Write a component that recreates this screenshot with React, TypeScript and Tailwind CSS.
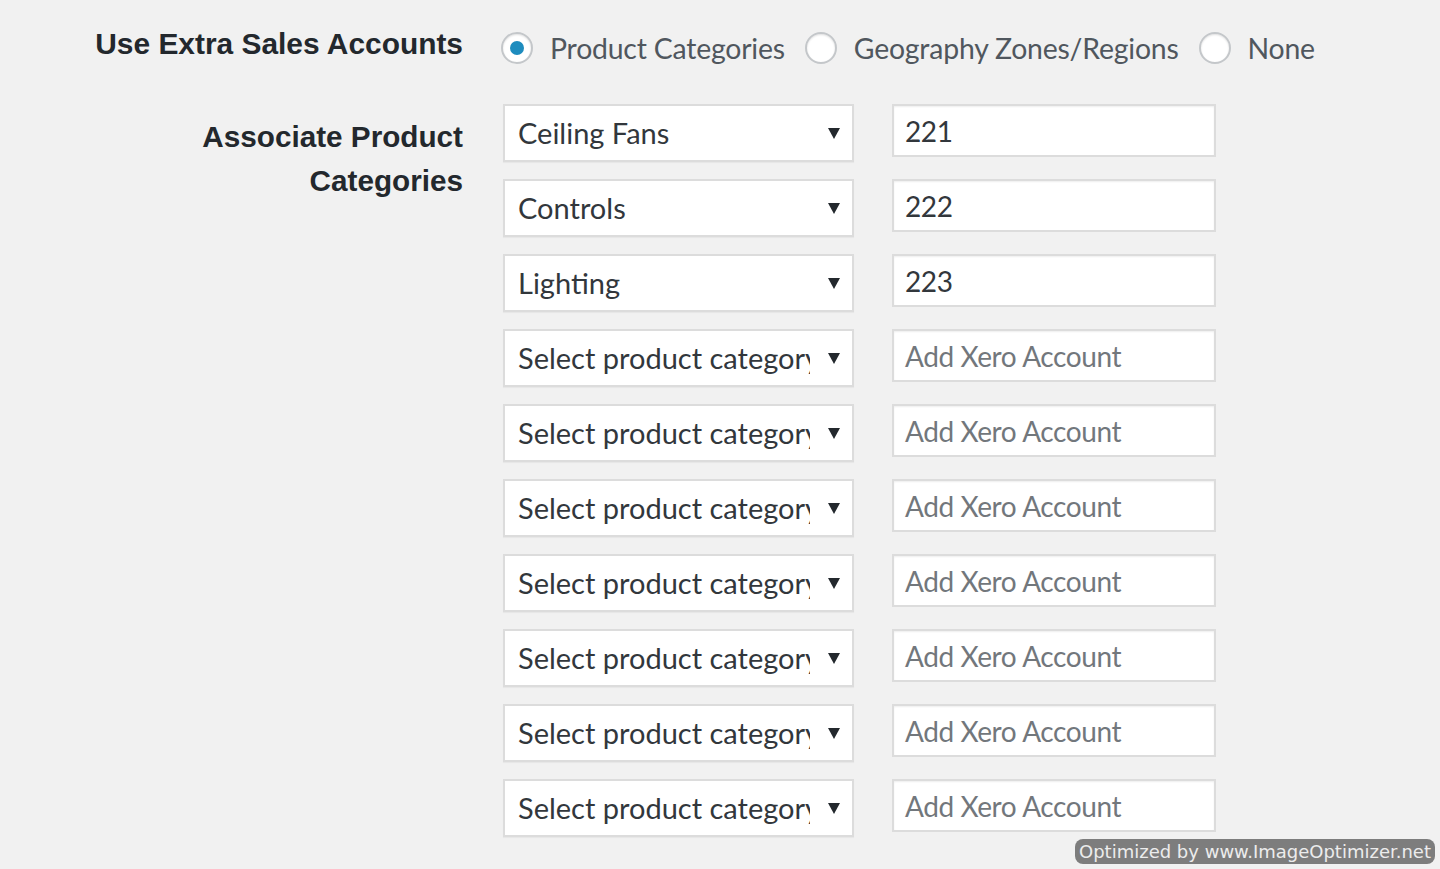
import React from "react";

const categories = ["Ceiling Fans", "Controls", "Lighting", "", "", "", "", "", "", ""];
const accounts = ["221", "222", "223", "", "", "", "", "", "", ""];

function Radio({ checked, label }: { checked?: boolean; label: string }) {
  return (
    <div className="flex items-center">
      <span className="flex h-[32px] w-[32px] items-center justify-center rounded-full border-2 border-[#c4c7ca] bg-white shadow-[inset_0_1px_2px_rgba(0,0,0,0.12)]">
        {checked && <span className="h-[14px] w-[14px] rounded-full bg-[#1e8cbe]" />}
      </span>
      <span className="ml-[17px] mr-[20px] text-[#50575e]">{label}</span>
    </div>
  );
}

function Arrow() {
  return (
    <svg width="12" height="11" viewBox="0 0 12 11" className="shrink-0">
      <path d="M0 0 H12 L6 11 Z" fill="#23282d" />
    </svg>
  );
}

export default function App() {
  return (
    <div
      className="relative min-h-[869px] w-[1440px] bg-[#f1f1f1]"
      style={{ fontFamily: "Lato, 'Noto Sans', sans-serif" }}
    >
      <div className="flex pt-[16px]">
        <div
          className="w-[463px] shrink-0 text-right text-[29.9px] font-bold leading-[56px] text-[#23282d]"
          style={{ fontFamily: "'Liberation Sans', Arial, sans-serif" }}
        >
          Use Extra Sales Accounts
        </div>
        <div className="ml-[38px] flex h-[64px] items-center text-[28.4px] tracking-[-0.2px]">
          <Radio checked label="Product Categories" />
          <Radio label="Geography Zones/Regions" />
          <Radio label="None" />
        </div>
      </div>

      <div className="mt-[24px] flex">
        <div
          className="w-[463px] shrink-0 pt-[11px] text-right text-[29.7px] font-bold leading-[44px] text-[#23282d]"
          style={{ fontFamily: "'Liberation Sans', Arial, sans-serif" }}
        >
          Associate Product
          <br />
          Categories
        </div>
        <div className="ml-[40px] flex flex-col gap-[17px]">
          {categories.map((cat, i) => (
            <div key={i} className="flex items-start gap-[38px]">
              <div className="flex h-[58px] w-[351px] items-center border-2 border-[#dcdcdc] bg-white pl-[13px] pr-[12px] text-[29px] text-[#32373c] shadow-[0_1px_1px_rgba(0,0,0,0.04)]">
                <span className="min-w-0 flex-1 overflow-hidden whitespace-nowrap">
                  {cat || "Select product category"}
                </span>
                <span className="ml-[18px]">
                  <Arrow />
                </span>
              </div>
              <div className="flex h-[53px] w-[324px] items-center border-2 border-[#dcdcdc] bg-white pl-[11px] text-[28px] tracking-[-0.4px] shadow-[inset_0_1px_2px_rgba(0,0,0,0.07)]">
                {accounts[i] ? (
                  <span className="text-[#32373c]">{accounts[i]}</span>
                ) : (
                  <span className="text-[#72777c]">Add Xero Account</span>
                )}
              </div>
            </div>
          ))}
        </div>
      </div>

      <div
        className="absolute left-[1075px] top-[839px] flex h-[25px] w-[360px] items-center justify-center rounded-[8px] bg-[#7d7d7d] text-[18px] text-[#ececec]"
        style={{ fontFamily: "'DejaVu Sans', Verdana, sans-serif" }}
      >
        Optimized by www.ImageOptimizer.net
      </div>
    </div>
  );
}
